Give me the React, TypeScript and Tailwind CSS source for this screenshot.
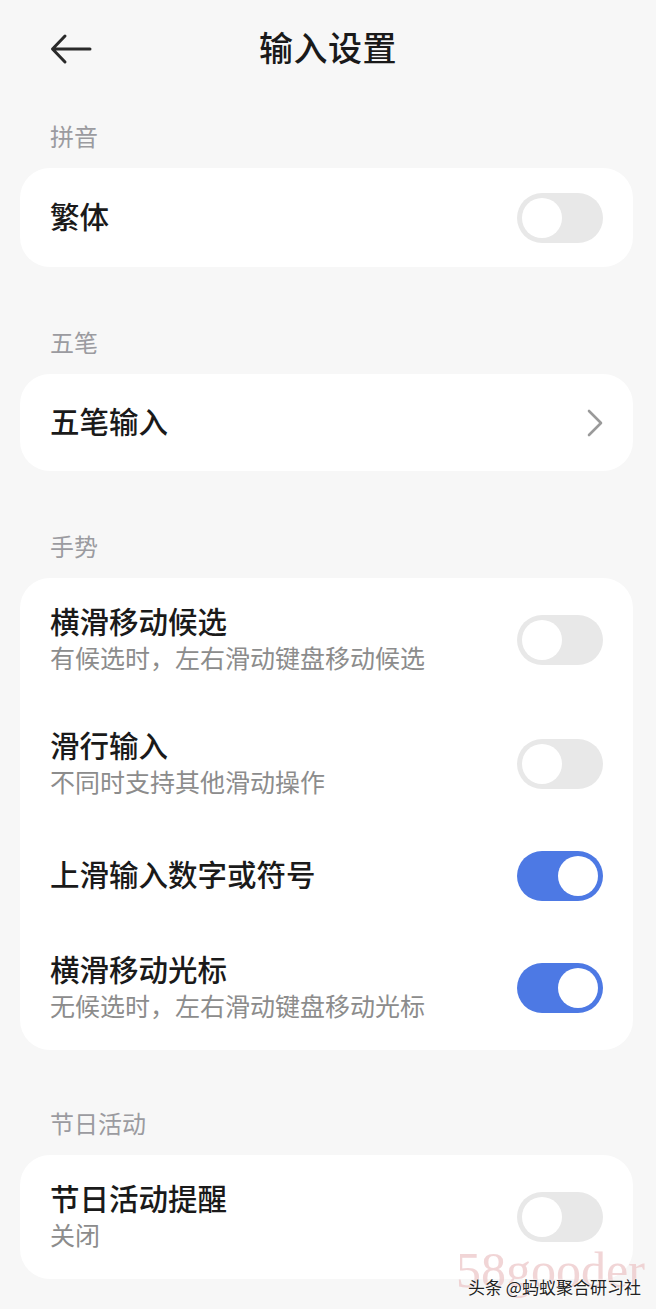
import { ReactNode } from "react";

const FONT = { fontFamily: '"Noto Sans CJK SC", "Noto Sans", sans-serif' };

function Toggle({ on }: { on?: boolean }) {
  return (
    <div
      className={`w-[86px] h-[50px] rounded-full p-[5px] flex shrink-0 ${
        on ? "bg-[#4d79e4] justify-end" : "bg-[#e8e8e8] justify-start"
      }`}
    >
      <div className="size-[40px] rounded-full bg-white" />
    </div>
  );
}

function Chevron() {
  return (
    <svg width="16" height="28" viewBox="0 0 16 28" fill="none">
      <path d="M2 2 L14 14 L2 26" stroke="#9a9a9a" strokeWidth="2.6" strokeLinecap="round" strokeLinejoin="round" />
    </svg>
  );
}

function Row({
  title,
  sub,
  right,
  height,
}: {
  title: string;
  sub?: string;
  right: ReactNode;
  height: string;
}) {
  return (
    <div className={`flex items-center justify-between pl-[30px] pr-[30px] ${height}`}>
      <div className="flex flex-col gap-[3px] mb-[6px]">
        <span className="text-[29.5px] leading-[36px] font-medium text-[#1a1a1a]">{title}</span>
        {sub && <span className="text-[25px] leading-[32px] text-[#8c8c8c]">{sub}</span>}
      </div>
      {right}
    </div>
  );
}

function Section({ label, children, top }: { label: string; children: ReactNode; top: string }) {
  return (
    <div className={top}>
      <p className="pl-[50px] text-[24px] leading-[32px] text-[#9b9ba0] mb-[16px]">{label}</p>
      <div className="ml-[20px] mr-[23px] rounded-[30px] bg-white overflow-hidden">{children}</div>
    </div>
  );
}

export default function App() {
  return (
    <div className="relative w-[656px] h-[1309px] bg-[#f7f7f7] overflow-hidden" style={FONT}>
      {/* header */}
      <div className="h-[96px] grid grid-cols-[1fr_auto_1fr] items-center">
        <div className="pl-[50px] pt-[2px]">
          <svg width="42" height="32" viewBox="0 0 42 32" fill="none">
            <path d="M40 16 H3 M15 3 L2.5 16 L15 29" stroke="#2a2a2a" strokeWidth="3" strokeLinecap="round" strokeLinejoin="round" />
          </svg>
        </div>
        <h1 className="text-[34px] leading-[44px] font-medium text-[#1a1a1a] tracking-[0.5px] mb-[2px]">输入设置</h1>
        <div />
      </div>

      <Section label="拼音" top="pt-[24px]">
        <Row title="繁体" right={<Toggle />} height="h-[99px]" />
      </Section>

      <Section label="五笔" top="pt-[59px]">
        <Row title="五笔输入" right={<Chevron />} height="h-[97px]" />
      </Section>

      <Section label="手势" top="pt-[59px]">
        <Row title="横滑移动候选" sub="有候选时，左右滑动键盘移动候选" right={<Toggle />} height="h-[124px]" />
        <Row title="滑行输入" sub="不同时支持其他滑动操作" right={<Toggle />} height="h-[124px]" />
        <Row title="上滑输入数字或符号" right={<Toggle on />} height="h-[100px]" />
        <Row title="横滑移动光标" sub="无候选时，左右滑动键盘移动光标" right={<Toggle on />} height="h-[124px]" />
      </Section>

      <Section label="节日活动" top="pt-[57px]">
        <Row title="节日活动提醒" sub="关闭" right={<Toggle />} height="h-[124px]" />
      </Section>

      {/* watermark */}
      <span
        className="absolute left-[456px] top-[1240px] whitespace-nowrap text-[50px] leading-[60px] text-[#ecc4c6] opacity-70"
        style={{ fontFamily: '"Liberation Serif", serif' }}
      >
        58gooder
      </span>
      <span className="absolute left-[468px] top-[1274px] whitespace-nowrap text-[17px] leading-[26px] text-[#222] [text-shadow:0_0_2px_#fff,0_0_2px_#fff]">
        头条 @蚂蚁聚合研习社
      </span>
    </div>
  );
}
